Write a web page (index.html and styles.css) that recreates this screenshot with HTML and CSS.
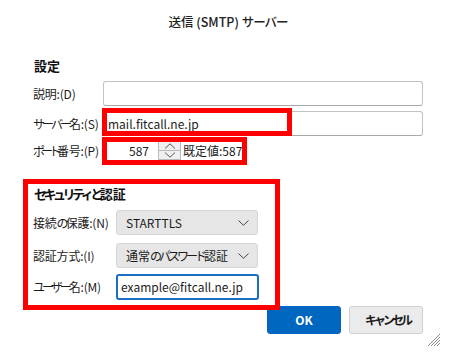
FILE: index.html
```html
<!DOCTYPE html>
<html lang="ja">
<head>
<meta charset="utf-8">
<title>送信 (SMTP) サーバー</title>
<link rel="stylesheet" href="styles.css">
</head>
<body>
<div class="dialog">
  <div class="title">送信 (SMTP) <span class="kt">サーバー</span></div>
  <div class="heading">設定</div>
  <div class="row row-desc">
    <span class="lbl">説明:(D)</span>
    <div class="field"></div>
  </div>
  <div class="row row-server">
    <span class="lbl"><span class="k">サーバー</span>名:(S)</span>
    <div class="field mark-server">mail.fitcall.ne.jp</div>
  </div>
  <div class="row row-port">
    <span class="lbl"><span class="k k-port">ポート</span>番号:(P)</span>
    <div class="port-group">
      <div class="port-input">587</div>
      <div class="spinner">
        <div class="spin-btn">
          <svg width="12" height="6" viewBox="0 0 12 6"><polyline points="1,5.5 6,0.8 11,5.5" fill="none" stroke="#555" stroke-width="1"/></svg>
        </div>
        <div class="spin-btn">
          <svg width="12" height="6" viewBox="0 0 12 6"><polyline points="1,0.5 6,5.2 11,0.5" fill="none" stroke="#555" stroke-width="1"/></svg>
        </div>
      </div>
      <span class="default">既定値:587</span>
    </div>
  </div>

  <div class="security">
    <div class="heading sec-heading"><span class="kh">セキュリティと</span>認証</div>
    <div class="row srow first">
      <span class="lbl slbl">接続<span class="k">の</span>保護:(N)</span>
      <div class="select">STARTTLS
        <svg class="chev" width="11" height="6" viewBox="0 0 11 6"><polyline points="0.5,0.5 5.5,5.3 10.5,0.5" fill="none" stroke="#444" stroke-width="1"/></svg>
      </div>
    </div>
    <div class="row srow">
      <span class="lbl slbl">認証方式:(I)</span>
      <div class="select">通常<span class="k">のパスワード</span>認証
        <svg class="chev" width="11" height="6" viewBox="0 0 11 6"><polyline points="0.5,0.5 5.5,5.3 10.5,0.5" fill="none" stroke="#444" stroke-width="1"/></svg>
      </div>
    </div>
    <div class="row srow user">
      <span class="lbl slbl"><span class="k">ユーザー</span>名:(M)</span>
      <div class="field focus">example@fitcall.ne.jp</div>
    </div>
  </div>

  <div class="buttons">
    <div class="btn primary">OK</div>
    <div class="btn"><span class="k">キャンセル</span></div>
  </div>

  <svg class="grip" width="14" height="14" viewBox="0 0 14 14">
    <line x1="13" y1="1" x2="1" y2="13" stroke="#888" stroke-width="1"/>
    <line x1="13" y1="4" x2="4" y2="13" stroke="#888" stroke-width="1"/>
    <line x1="13" y1="7" x2="7" y2="13" stroke="#888" stroke-width="1"/>
    <line x1="13" y1="10" x2="10" y2="13" stroke="#888" stroke-width="1"/>
  </svg>
</div>
</body>
</html>
```
FILE: styles.css
```css
body {
  margin: 0;
  background: #fff;
  font-family: "Noto Sans CJK JP", "Noto Sans", sans-serif;
  font-size: 12px;
  color: #1b1b1b;
}

.k { letter-spacing: -3px; }
.k-port { letter-spacing: -4px; }
.kh { letter-spacing: -3.5px; }
.kt { letter-spacing: -1px; }

.dialog {
  position: relative;
  width: 455px;
  height: 358px;
  box-sizing: border-box;
  padding: 14px 32px 0 33px;
}

.title {
  text-align: center;
  font-size: 12.5px;
  line-height: 16px;
  color: #222;
  font-weight: 500;
}

.heading {
  margin: 28px 0 0 1px;
  font-size: 13px;
  font-weight: bold;
  line-height: 16px;
  color: #111;
}

.row {
  display: flex;
  align-items: center;
}

.lbl {
  width: 70px;
  flex: none;
  white-space: nowrap;
  line-height: 16px;
  letter-spacing: -0.2px;
}

.field {
  position: relative;
  flex: 1;
  height: 25px;
  box-sizing: border-box;
  border: 1px solid #c2c2c2;
  border-bottom-color: #a8a8a8;
  border-radius: 3px;
  padding: 0 4px;
  line-height: 23px;
  background: #fff;
}

.row-desc { margin-top: 7px; }
.row-server { margin-top: 5px; }
.row-port { margin-top: 5px; height: 19px; }

.mark-server::after {
  content: "";
  position: absolute;
  left: -2px;
  top: -4px;
  width: 190px;
  height: 28px;
  box-sizing: border-box;
  border: 5px solid #ff0000;
}

.port-group {
  position: relative;
  display: flex;
  align-items: center;
  height: 19px;
}

.port-group::after {
  content: "";
  position: absolute;
  left: -1px;
  top: -4px;
  width: 145px;
  height: 28px;
  box-sizing: border-box;
  border: 5px solid #ff0000;
}

.port-input {
  width: 55px;
  height: 19px;
  box-sizing: border-box;
  text-align: right;
  padding-right: 9px;
  line-height: 19px;
}

.spinner {
  display: flex;
  flex-direction: column;
  width: 23px;
  height: 19px;
  margin-right: 2px;
}

.spin-btn {
  flex: 1;
  display: flex;
  align-items: center;
  justify-content: center;
  background: #f0f0f0;
  border: 1px solid #b9b9b9;
}

.spin-btn + .spin-btn { border-top: none; }

.default {
  line-height: 16px;
}

.security {
  position: relative;
  margin-top: 26px;
}

.security::after {
  content: "";
  position: absolute;
  left: -10px;
  top: -7px;
  width: 257px;
  height: 131px;
  box-sizing: border-box;
  border: 5px solid #ff0000;
  pointer-events: none;
}

.sec-heading {
  margin-top: 0;
}

.slbl { width: 83px; }

.srow { margin-top: 8px; }
.srow.user { margin-top: 6px; }

.select {
  position: relative;
  width: 142px;
  height: 25px;
  box-sizing: border-box;
  background: #e6e6e6;
  border: 1px solid #d6d6d6;
  border-radius: 3px;
  padding-left: 9px;
  line-height: 23px;
  white-space: nowrap;
}

.chev {
  position: absolute;
  right: 8px;
  top: 9px;
}

.field.focus {
  flex: none;
  width: 143px;
  height: 26px;
  border: 2px solid #1a6fc4;
  border-radius: 3px;
  padding-left: 3px;
  line-height: 22px;
}

.buttons {
  display: flex;
  justify-content: flex-end;
  gap: 8px;
  margin-top: 6px;
}

.btn {
  width: 74px;
  height: 28px;
  box-sizing: border-box;
  border: 1px solid #d0d0d0;
  border-radius: 3px;
  background: #ebebeb;
  text-align: center;
  line-height: 26px;
  font-weight: bold;
  color: #1b1b1b;
}

.btn .k { margin-right: -3px; }

.btn.primary {
  background: #0067c0;
  border-color: #0067c0;
  color: #fff;
}

.grip {
  position: absolute;
  right: 14px;
  bottom: 11px;
}
```
